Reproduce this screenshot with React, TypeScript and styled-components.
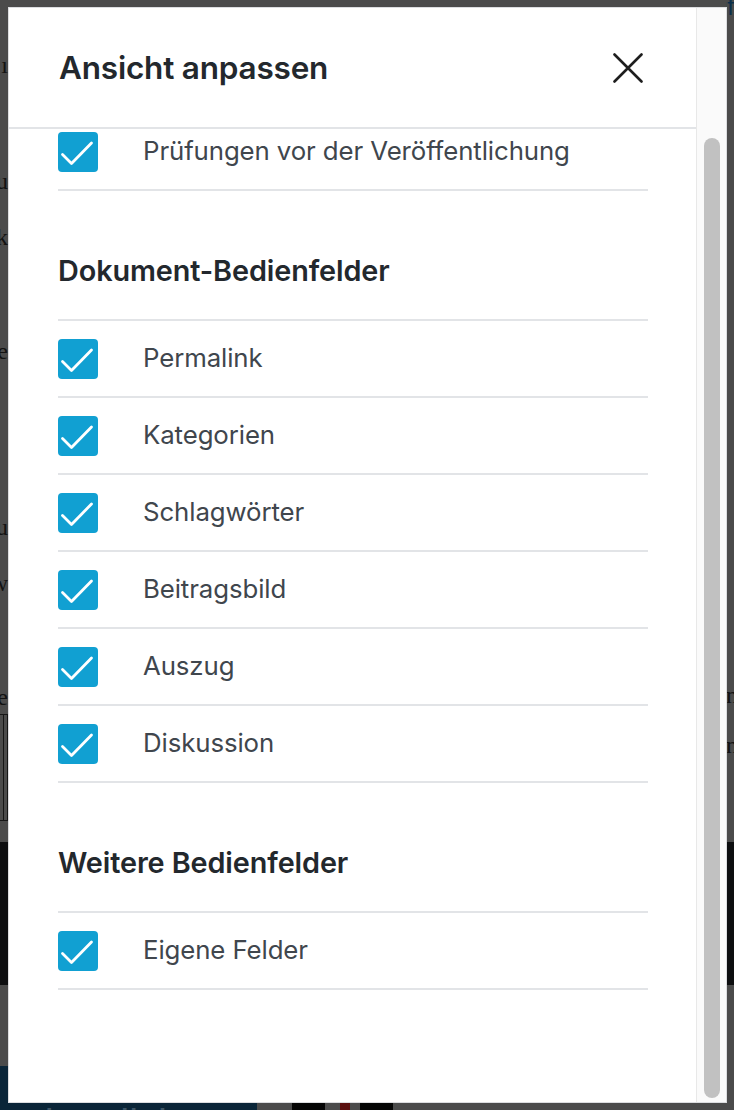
import React, { useLayoutEffect, useRef } from "react";
import styled, { createGlobalStyle } from "styled-components";

const Global = createGlobalStyle`
  html, body { margin: 0; padding: 0; height: 100%; overflow: hidden; }
  body { background: #4b4b4b; font-family: Inter, "Noto Sans", sans-serif; }
  #root { height: 100%; }
  * { box-sizing: border-box; }
`;

const Page = styled.div`
  position: relative;
  width: 100%;
  height: 1110px;
  overflow: hidden;
  background: #4b4b4b;
`;

/* ---------- dimmed page behind the dialog ---------- */
const Backdrop = styled.div`
  display: flex;
  flex-direction: column;
  height: 100%;
`;

const BgTop = styled.div`
  height: 842px;
  display: flex;
  justify-content: space-between;
`;

const EdgeCol = styled.div<{ $right?: boolean }>`
  width: 8px;
  overflow: hidden;
  display: flex;
  flex-direction: column;
  align-items: ${(p) => (p.$right ? "flex-start" : "flex-end")};
  font-family: "Liberation Serif", serif;
  font-size: 24px;
  line-height: 26px;
  color: #121212;
`;

const Glyph = styled.span<{ $gap: number }>`
  margin-top: ${(p) => p.$gap}px;
  white-space: nowrap;
`;

const TopLink = styled.span`
  margin-top: -6px;
  margin-left: -28px;
  font-family: "Liberation Sans", sans-serif;
  font-size: 24px;
  color: #0b2f4a;
  white-space: nowrap;
`;

const BgTable = styled.div`
  margin-top: 4px;
  width: 14px;
  height: 107px;
  border: 1px solid #161616;
  border-left: none;
  margin-left: -8px;
  box-shadow: inset -3px 0 0 #4b4b4b, inset -4px 0 0 #161616;
`;

const DarkBand = styled.div`
  height: 143px;
  background: #0d0e10;
`;

const GrayGap = styled.div`
  height: 47px;
`;

const BgBottom = styled.div`
  flex: 1;
  display: flex;
  align-items: flex-end;
`;

const NavyBlock = styled.div`
  width: 257px;
  height: 100%;
  background: #0a2538;
  display: flex;
  align-items: flex-end;
  overflow: hidden;
  font-family: "Liberation Sans", sans-serif;
  font-size: 40px;
  line-height: 1;
  color: #3e5566;
  padding-left: 18px;
  margin-bottom: -34px;
`;

const Spot = styled.div<{ $w: number; $c: string; $ml: number }>`
  width: ${(p) => p.$w}px;
  height: 8px;
  margin-left: ${(p) => p.$ml}px;
  background: ${(p) => p.$c};
`;

/* ---------- dialog ---------- */
const Dialog = styled.div`
  position: absolute;
  left: 8px;
  top: 7px;
  width: 719px;
  height: 1096px;
  background: #fff;
  border: 1px solid #dcdde0;
  display: flex;
`;

const Scroller = styled.div`
  flex: 1;
  min-width: 0;
  overflow-y: auto;
  scrollbar-width: none;
  &::-webkit-scrollbar { display: none; }
`;

const Rail = styled.div`
  width: 30px;
  flex: none;
  background: #fafafa;
  border-left: 1px solid #e8e8e8;
  display: flex;
  flex-direction: column;
  padding: 130px 6px 4px 7px;
`;

const Thumb = styled.div`
  flex: 1;
  border-radius: 8px;
  background: #c1c1c1;
`;

const Header = styled.div`
  position: sticky;
  top: 0;
  z-index: 1;
  height: 121px;
  background: #fff;
  border-bottom: 2px solid #e2e4e7;
  display: flex;
  align-items: center;
  justify-content: space-between;
  padding: 0 50px 0 50px;
`;

const Title = styled.h1`
  margin: 0;
  font-size: 31.5px;
  font-weight: 600;
  color: #23282d;
  letter-spacing: -0.2px;
`;

const CloseButton = styled.button`
  width: 36px;
  height: 36px;
  padding: 0;
  border: none;
  background: transparent;
  display: flex;
  align-items: center;
  justify-content: center;
  cursor: pointer;
`;

const Content = styled.div`
  padding: 0 48px 112px 49px;
`;

const Section = styled.section`
  padding-top: 64px;
`;

const SectionTitle = styled.h2`
  margin: 0 0 33px;
  font-size: 28.8px;
  line-height: 31px;
  font-weight: 600;
  color: #23282d;
  letter-spacing: -0.1px;
`;

const List = styled.div`
  border-top: 2px solid #e2e4e7;
`;

const Row = styled.label`
  height: 77px;
  display: flex;
  align-items: center;
  border-bottom: 2px solid #e2e4e7;
`;

const Box = styled.span`
  width: 40px;
  height: 40px;
  flex: none;
  border-radius: 4px;
  background: #11a0d2;
  display: flex;
`;

const Label = styled.span`
  margin-left: 45px;
  margin-top: -2px;
  font-size: 25.8px;
  color: #40464d;
  letter-spacing: -0.1px;
`;

const Check = () => (
  <svg width="40" height="40" viewBox="0 0 40 40">
    <polyline
      points="4.5,22.5 13.5,31.5 33.5,11"
      fill="none"
      stroke="#fff"
      strokeWidth="2.8"
      strokeLinecap="round"
      strokeLinejoin="round"
    />
  </svg>
);

const CloseIcon = () => (
  <svg width="30" height="30" viewBox="0 0 30 30">
    <path d="M1.5 1.5 L28.5 28.5 M28.5 1.5 L1.5 28.5" stroke="#1e1e1e" strokeWidth="2.6" strokeLinecap="round" />
  </svg>
);

const sections = [
  { title: "Allgemein", items: ["Prüfungen vor der Veröffentlichung"] },
  {
    title: "Dokument-Bedienfelder",
    items: ["Permalink", "Kategorien", "Schlagwörter", "Beitragsbild", "Auszug", "Diskussion"],
  },
  { title: "Weitere Bedienfelder", items: ["Eigene Felder"] },
];

export default function App() {
  const ref = useRef<HTMLDivElement>(null);
  useLayoutEffect(() => {
    if (ref.current) ref.current.scrollTop = ref.current.scrollHeight;
  }, []);

  return (
    <Page>
      <Global />
      <Backdrop>
        <BgTop>
          <EdgeCol>
            <Glyph $gap={52}>ı</Glyph>
            <Glyph $gap={90}>u</Glyph>
            <Glyph $gap={30}>k</Glyph>
            <Glyph $gap={88}>le</Glyph>
            <Glyph $gap={150}>u</Glyph>
            <Glyph $gap={30}>w</Glyph>
            <Glyph $gap={88}>e</Glyph>
            <BgTable />
          </EdgeCol>
          <EdgeCol $right>
            <TopLink>Auf</TopLink>
            <Glyph $gap={662}>n</Glyph>
            <Glyph $gap={24}>n</Glyph>
          </EdgeCol>
        </BgTop>
        <DarkBand />
        <GrayGap />
        <BgBottom>
          <NavyBlock>Aktualisieren</NavyBlock>
          <Spot $w={33} $c="#050505" $ml={35} />
          <Spot $w={10} $c="#5a0f0f" $ml={15} />
          <Spot $w={33} $c="#050505" $ml={10} />
        </BgBottom>
      </Backdrop>

      <Dialog role="dialog" aria-label="Ansicht anpassen">
        <Scroller ref={ref}>
          <Header>
            <Title>Ansicht anpassen</Title>
            <CloseButton aria-label="Schließen">
              <CloseIcon />
            </CloseButton>
          </Header>
          <Content>
            {sections.map((s) => (
              <Section key={s.title}>
                <SectionTitle>{s.title}</SectionTitle>
                <List>
                  {s.items.map((it) => (
                    <Row key={it}>
                      <Box>
                        <Check />
                      </Box>
                      <Label>{it}</Label>
                    </Row>
                  ))}
                </List>
              </Section>
            ))}
          </Content>
        </Scroller>
        <Rail>
          <Thumb />
        </Rail>
      </Dialog>
    </Page>
  );
}
